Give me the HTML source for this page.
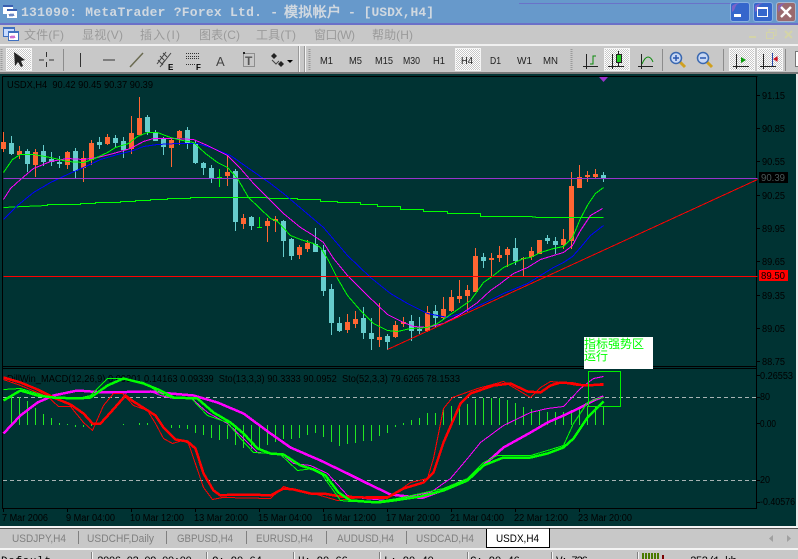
<!DOCTYPE html>
<html><head><meta charset="utf-8"><title>MetaTrader</title>
<style>
html,body{margin:0;padding:0;width:798px;height:559px;overflow:hidden;background:#c8c8c8}
svg{display:block}
text{font-family:"Liberation Sans","WenQuanYi Zen Hei",sans-serif;font-size:10px;fill:#000;white-space:pre}
.t{font-family:"Liberation Mono","WenQuanYi Zen Hei",monospace;font-weight:bold;font-size:13px;fill:#d0d8e0}
.m{font-family:"WenQuanYi Zen Hei","Liberation Sans",sans-serif;font-size:12px;fill:#9a9a9a}
.b{font-size:10.5px;fill:#222}
.k{font-size:11px;fill:#808080}
.s{font-family:"Liberation Mono",monospace;font-size:11px;fill:#000}
.c polyline,.l{fill:none;shape-rendering:crispEdges}
.x{shape-rendering:crispEdges}
</style></head><body>
<svg width="798" height="559" viewBox="0 0 798 559" xmlns="http://www.w3.org/2000/svg">
<defs>
<pattern id="chk" width="2" height="2" patternUnits="userSpaceOnUse"><rect width="2" height="2" fill="#fff"/><rect width="1" height="1" fill="#c8c8c8"/><rect x="1" y="1" width="1" height="1" fill="#c8c8c8"/></pattern>
</defs>
<!-- title -->
<rect width="798" height="23" fill="#6799cb"/>
<rect y="23" width="798" height="2" fill="#6a70c8"/>
<rect x="519" y="3" width="212" height="1" fill="#6a72c8"/>
<g class="x">
<rect x="3" y="5" width="10" height="9" fill="#fff"/><rect x="3" y="5" width="10" height="2" fill="#3a5fb0"/>
<rect x="7" y="9" width="10" height="9" fill="#fff"/><rect x="7" y="9" width="10" height="2" fill="#3a5fb0"/>
<path d="M9 14l1 2 1-2 1 2 1-2 1 2" stroke="#3a5fb0" fill="none"/>
</g>
<text class="t" x="21" y="16" textLength="257">131090: MetaTrader ?Forex Ltd. -</text>
<text class="t" x="284" y="17" style="font-size:14px" textLength="57">模拟帐户</text>
<text class="t" x="348" y="16" textLength="86">- [USDX,H4]</text>
<!-- window buttons -->
<rect x="730.5" y="2.5" width="19" height="19" rx="2.5" fill="#3566cc" stroke="#8ab0e0"/>
<path d="M732 6q3-3 8-3-4 1-5 5-1 3-3 4z" fill="#7a62c8"/>
<rect x="734" y="14" width="7" height="3" fill="#fff"/>
<rect x="753.5" y="2.5" width="19" height="19" rx="2.5" fill="#3566cc" stroke="#8ab0e0"/>
<path d="M755 6q3-3 8-3-4 1-5 5-1 3-3 4z" fill="#7a62c8"/>
<rect x="757.5" y="7.5" width="10" height="9" fill="none" stroke="#fff"/><rect x="757" y="7" width="11" height="2" fill="#fff"/>
<rect x="776.5" y="2.5" width="19" height="19" rx="2.5" fill="#9a6a6e" stroke="#a8b8d0"/>
<path d="M778 6q3-3 8-3-4 1-5 5-1 3-3 4z" fill="#8a62b0"/>
<path d="M781 7l10 10M791 7l-10 10" stroke="#fff" stroke-width="2.4"/>
<!-- menu -->
<rect y="25" width="798" height="19" fill="#c8c8c8"/>
<g class="x">
<rect x="3.5" y="27.5" width="11" height="9" fill="#c8dcff" stroke="#3f70c0"/>
<rect x="3" y="27" width="12" height="2" fill="#3f70c0"/>
<rect x="8.5" y="31.5" width="10" height="9" fill="#fff" stroke="#3f70c0"/>
<rect x="8" y="31" width="11" height="2" fill="#3f70c0"/>
<path d="M10 36l1 2 1-2 1 2 1-2 1 2" stroke="#c040c0" fill="none"/>
</g>
<text class="m" x="24" y="39" textLength="40">文件(F)</text>
<text class="m" x="82" y="39" textLength="41">显视(V)</text>
<text class="m" x="140" y="39" textLength="40">插入(I)</text>
<text class="m" x="199" y="39" textLength="41">图表(C)</text>
<text class="m" x="256" y="39" textLength="40">工具(T)</text>
<text class="m" x="314" y="39" textLength="41">窗口(W)</text>
<text class="m" x="372" y="39" textLength="41">帮助(H)</text>
<g stroke="#d4d4a8" fill="none">
<path d="M749 37h7" stroke-width="2"/>
<rect x="766.5" y="32.5" width="7" height="6"/><path d="M769 32v-2.500h7v6h-2"/>
<path d="M785 31l7 7M792 31l-7 7" stroke-width="2"/>
</g>
<!-- toolbar -->
<rect y="44" width="798" height="2" fill="#f0f0f0"/>
<rect y="46" width="798" height="27" fill="#c8c8c8"/>
<rect y="72" width="798" height="2" fill="#7a7a7a"/>
<path d="M1.500 49V71" stroke="#999" stroke-dasharray="1 1" stroke-width="2"/>
<path d="M309.500 49V71M571.500 49V70" stroke="#999" stroke-dasharray="1 1" stroke-width="2"/>
<rect x="6.500" y="48.500" width="25" height="22" fill="url(#chk)" stroke="#f4f4f4"/>
<path d="M14 52L15 66L18 62L21 67L23 66L21 61L25 60Z" fill="#222"/>
<g class="x" stroke="#333" fill="none">
<path d="M39 60H44M49 60H54M46.500 52V57M46.500 62V67"/>
<path d="M80.500 53V67M103 60H115"/>
</g>
<path d="M130 67L143 53" stroke="#6a6a50" stroke-width="1.500"/>
<path d="M63.500 49V71M662.500 49V71M723.500 49V71M785.500 49V71" stroke="#8c8c8c"/>
<g stroke="#444" fill="none"><path d="M157 64L166 52M160 67L171 53M160 56l4 4M163 53l4 4M158 60l5 5M165 60l-3 4"/></g>
<text x="168" y="70" style="font-size:8px;font-weight:bold">E</text>
<path class="x" d="M186 53.500H199M186 56.500H199M186 58.500H199M186 64.500H195" stroke="#333" stroke-dasharray="1 1"/>
<text x="196" y="70" style="font-size:8px;font-weight:bold">F</text>
<text x="216" y="66" style="font-size:13px;fill:#444">A</text>
<rect x="243.500" y="53.500" width="11" height="13" fill="none" stroke="#555" stroke-dasharray="1 1"/>
<rect x="243" y="52" width="2" height="2" fill="#222"/>
<text x="245" y="65" style="font-size:12px;font-weight:bold;fill:#555">T</text>
<path d="M274 53l3 3-3 3-3-3z" fill="#222"/><path d="M281 61l3 3-3 3-3-3z" fill="#222"/>
<path d="M272 60l4 4 3-3" stroke="#444" fill="none"/>
<path d="M287 60h6l-3 3z" fill="#000"/>
<path d="M299.500 46V72M305.500 46V72" stroke="#f4f4f4"/>
<path d="M298.500 46V72M304.500 46V72" stroke="#999"/>
<rect x="455.500" y="48.500" width="25" height="22" fill="url(#chk)" stroke="#f4f4f4"/>
<text class="b" x="320" y="64" lengthAdjust="spacingAndGlyphs" textLength="13">M1</text>
<text class="b" x="349" y="64" lengthAdjust="spacingAndGlyphs" textLength="13">M5</text>
<text class="b" x="375" y="64" lengthAdjust="spacingAndGlyphs" textLength="18">M15</text>
<text class="b" x="403" y="64" lengthAdjust="spacingAndGlyphs" textLength="17">M30</text>
<text class="b" x="433" y="64" lengthAdjust="spacingAndGlyphs" textLength="12">H1</text>
<text class="b" x="461" y="64" lengthAdjust="spacingAndGlyphs" textLength="12">H4</text>
<text class="b" x="490" y="64" lengthAdjust="spacingAndGlyphs" textLength="11">D1</text>
<text class="b" x="517" y="64" lengthAdjust="spacingAndGlyphs" textLength="15">W1</text>
<text class="b" x="543" y="64" lengthAdjust="spacingAndGlyphs" textLength="15">MN</text>
<!-- chart icons -->
<rect x="604.500" y="48.500" width="25" height="22" fill="url(#chk)" stroke="#f4f4f4"/>
<rect x="729.500" y="48.500" width="25" height="22" fill="url(#chk)" stroke="#f4f4f4"/>
<rect x="757.500" y="48.500" width="25" height="22" fill="url(#chk)" stroke="#f4f4f4"/>
<g class="x" stroke="#222" fill="none">
<path d="M586.500 54V69M583 66.500H598"/>
<path d="M612.500 54V69M608 66.500H624"/>
<path d="M641.500 54V69M638 66.500H653"/>
<path d="M736.500 54V69M733 66.500H749"/>
<path d="M763.500 54V69M760 66.500H776"/>
</g>
<path d="M590 64h3v-8h3" stroke="#0a8a0a" fill="none" class="x"/>
<path d="M618.500 51V66" stroke="#222" class="x"/>
<rect x="616.500" y="54.500" width="5" height="8" fill="#22cc22" stroke="#222" class="x"/>
<path d="M642 64q3-7 6-7t5 5" stroke="#0a8a0a" fill="none"/>
<path d="M741 57l5 3-5 3z" fill="#0a9a0a"/>
<path d="M772.500 53V66" stroke="#2244aa" class="x"/>
<path d="M774 59h4M777 57l-3 2 3 2z" stroke="#cc1122" fill="#cc1122"/>
<g>
<path d="M680 62l5 5" stroke="#d0a020" stroke-width="3"/>
<circle cx="676" cy="58" r="5.500" fill="#c8d8f4" stroke="#3a68b0" stroke-width="1.500"/>
<path d="M673 58h6M676 55v6" stroke="#2a58b0" stroke-width="1.500"/>
<path d="M707 62l5 5" stroke="#d0a020" stroke-width="3"/>
<circle cx="703" cy="58" r="5.500" fill="#c8d8f4" stroke="#3a68b0" stroke-width="1.500"/>
<path d="M700 58h6" stroke="#2a58b0" stroke-width="1.500"/>
</g>
<rect x="795.500" y="51.500" width="4" height="15" fill="#fff" stroke="#777"/>
<!-- chart -->
<rect y="74" width="796" height="452" fill="#003333"/>
<rect x="796" y="74" width="2" height="452" fill="#e8e8e8"/>
<g class="x" stroke="#000" fill="none">
<path d="M2.500 76V509M2 76.500H757.500M756.500 76V509M2 366.500H757M2 368.500H757M2 508.500H757"/>
<path d="M757 95.500h3M757 128.500h3M757 161.500h3M757 195.500h3M757 228.500h3M757 261.500h3M757 295.500h3M757 328.500h3M757 361.500h3M757 375.500h3M757 397.500h3M757 423.500h3M757 480.500h3M757 502.500h3"/>
<path d="M3.500 509v3M67.500 509v3M131.500 509v3M195.500 509v3M259.500 509v3M323.500 509v3M387.500 509v3M451.500 509v3M515.500 509v3M579.500 509v3"/>
</g>
<path d="M599 77h9l-4.500 5z" fill="#9933cc"/>
<text x="7" y="88" lengthAdjust="spacingAndGlyphs" textLength="146">USDX,H4  90.42 90.45 90.37 90.39</text>
<g>
<text x="762" y="99" lengthAdjust="spacingAndGlyphs" textLength="23">91.15</text>
<text x="762" y="132" lengthAdjust="spacingAndGlyphs" textLength="23">90.85</text>
<text x="762" y="165" lengthAdjust="spacingAndGlyphs" textLength="23">90.55</text>
<text x="762" y="199" lengthAdjust="spacingAndGlyphs" textLength="23">90.25</text>
<text x="762" y="232" lengthAdjust="spacingAndGlyphs" textLength="23">89.95</text>
<text x="762" y="265" lengthAdjust="spacingAndGlyphs" textLength="23">89.65</text>
<text x="762" y="299" lengthAdjust="spacingAndGlyphs" textLength="23">89.35</text>
<text x="762" y="332" lengthAdjust="spacingAndGlyphs" textLength="23">89.05</text>
<text x="762" y="365" lengthAdjust="spacingAndGlyphs" textLength="23">88.75</text>
<text x="760" y="379" lengthAdjust="spacingAndGlyphs" textLength="33">0.26553</text>
<text x="760" y="400" lengthAdjust="spacingAndGlyphs" textLength="10">80</text>
<text x="760" y="427" lengthAdjust="spacingAndGlyphs" textLength="16">0.00</text>
<text x="760" y="483" lengthAdjust="spacingAndGlyphs" textLength="10">20</text>
<text x="760" y="505" lengthAdjust="spacingAndGlyphs" textLength="35">-0.40576</text>
</g>
<!-- candles -->
<path class="l" stroke="#ff6633" d="M3.500 132V152M19.500 146V159M35.500 149V177M67.500 151V169M83.500 151V182M91.500 140V165M107.500 134V145M131.500 116V154M139.500 97V135M171.500 138V167M179.500 130V145M227.500 156V186M243.500 214V229M267.500 218V242M275.500 216V232M299.500 245V259M307.500 240V252M347.500 314V333M355.500 311V328M379.500 303V347M395.500 321V338M403.500 317V327M427.500 306V332M443.500 297V320M451.500 290V312M459.500 280V303M467.500 285V312M475.500 248V292M491.500 253V277M499.500 246V262M507.500 247V267M523.500 257V276M531.500 247V260M563.500 229V249M571.500 172V249M579.500 165V188M587.500 171V182M595.500 169V179"/>
<path class="x" fill="#ff6633" d="M1 142h5V149h-5zM17 151h5V155h-5zM33 152h5V165h-5zM65 152h5V165h-5zM81 158h5V168h-5zM89 143h5V160h-5zM105 137h5V144h-5zM129 133h5V149h-5zM137 118h5V135h-5zM169 140h5V148h-5zM177 131h5V138h-5zM225 172h5V176h-5zM241 218h5V224h-5zM265 221h5V226h-5zM273 219h5V221h-5zM297 247h5V255h-5zM305 243h5V249h-5zM345 322h5V330h-5zM353 319h5V324h-5zM377 337h5V340h-5zM393 325h5V337h-5zM401 322h5V324h-5zM425 312h5V331h-5zM441 309h5V318h-5zM449 297h5V311h-5zM457 296h5V299h-5zM465 290h5V296h-5zM473 256h5V292h-5zM489 258h5V260h-5zM497 255h5V258h-5zM505 249h5V255h-5zM521 258h5V259h-5zM529 251h5V257h-5zM537 240h5V254h-5zM561 239h5V245h-5zM569 186h5V241h-5zM577 177h5V188h-5zM585 175h5V177h-5zM593 174h5V177h-5z"/>
<path class="l" stroke="#66cccc" d="M11.500 136V155M27.500 149V172M43.500 145V166M51.500 152V166M59.500 156V168M75.500 148V178M99.500 137V149M115.500 135V148M123.500 137V158M147.500 115V135M155.500 130V141M163.500 137V155M187.500 127V149M195.500 141V164M203.500 162V175M211.500 165V183M235.500 169V231M251.500 216V230M283.500 220V257M291.500 238V260M315.500 228V252M323.500 245V296M331.500 284V335M339.500 317V332M363.500 307V339M371.500 318V350M387.500 334V350M411.500 315V341M419.500 317V334M435.500 305V327M483.500 253V268M515.500 238V265M547.500 235V244M555.500 237V254M603.500 172V182"/>
<path class="x" fill="#66cccc" d="M9 143h5V154h-5zM25 151h5V164h-5zM41 151h5V162h-5zM49 159h5V162h-5zM57 162h5V164h-5zM73 151h5V171h-5zM97 142h5V145h-5zM113 138h5V143h-5zM121 141h5V150h-5zM145 117h5V132h-5zM153 132h5V141h-5zM161 138h5V147h-5zM185 130h5V143h-5zM193 143h5V163h-5zM201 163h5V168h-5zM209 168h5V179h-5zM233 171h5V222h-5zM249 217h5V226h-5zM281 221h5V241h-5zM289 239h5V256h-5zM313 244h5V252h-5zM321 250h5V291h-5zM329 289h5V323h-5zM337 323h5V331h-5zM361 318h5V333h-5zM369 333h5V339h-5zM385 336h5V342h-5zM409 321h5V331h-5zM417 329h5V331h-5zM433 311h5V318h-5zM481 257h5V261h-5zM513 248h5V261h-5zM545 238h5V241h-5zM553 241h5V245h-5zM601 175h5V179h-5z"/>
<path class="l" stroke="#00ff00" d="M219.500 169V187M217 177.500H222M259.500 217V228M257 227.500H262"/>
<g class="c" stroke-width="1" transform="translate(.5 .5)">
<polyline stroke="#00ff00" points="3,207 23,206 47,205 47,204 80,204 80,203 95,203 95,202 120,202 120,201 135,201 135,200 150,200 150,199 167,199 167,198 190,198 190,197 265,197 270,198 297,198 297,199 320,199 320,201 337,201 337,202 360,202 360,204 377,204 377,206 400,206 400,209 423,209 423,211 447,211 447,213 480,213 480,216 530,216 537,217 603,217"/>
<polyline stroke="#0000ff" points="3,219 17,205 33,192 50,182 67,174 83,167 100,159 117,154 133,150 143,146 157,144 177,143 197,143 213,148 230,155 247,167 270,183 283,193 303,210 323,227 347,255 370,277 390,293 407,303 427,313 447,317 463,312 483,303 503,293 527,283 540,275 553,267 563,262 572,256 580,247 590,235 603,225"/>
<polyline stroke="#ff00ff" points="3,199 10,188 20,179 33,168 50,161 67,158 83,159 97,157 113,153 130,148 143,141 153,138 173,138 193,139 207,145 227,155 240,168 253,183 270,200 283,213 300,227 313,235 323,242 333,258 347,275 367,295 387,314 403,322 413,326 427,327 443,323 460,314 477,302 490,290 500,283 513,273 527,267 540,259 553,255 563,252 572,245 580,230 590,215 602,208"/>
<polyline stroke="#00ff00" points="3,172 12,159 20,154 33,154 50,157 67,161 83,162 92,159 107,152 115,147 128,143 137,136 147,132 157,132 170,137 182,140 193,142 205,153 217,162 227,167 237,178 248,197 270,218 277,221 290,235 300,239 313,243 320,247 328,260 337,278 347,295 360,310 373,323 387,330 397,331 410,328 427,327 437,323 450,314 460,307 470,300 483,282 493,275 503,267 523,258 530,257 540,252 553,248 563,246 572,237 580,218 588,203 595,193 603,187"/>
<polyline stroke="#9933cc" points="3,178 757,178"/>
<polyline stroke="#ff0000" stroke-width="1" points="3,276 757,276"/>
<polyline stroke="#ff0000" points="387,349 757,179"/>
</g>
<!-- sub window -->
<path class="l" stroke="#a8b4b4" stroke-dasharray="4 3" d="M3 397.500H757M3 480.500H757"/>
<text x="7" y="382" lengthAdjust="spacingAndGlyphs" textLength="453">DillWin_MACD(12,26,9) 0.09301 0.14163 0.09339  Sto(13,3,3) 90.3333 90.0952  Sto(52,3,3) 79.6265 78.1533</text>
<path class="l" stroke="#22e822" d="M11.500 397V425M19.500 397V425M27.500 401V425M35.500 408V425M43.500 414V425M51.500 418V425M59.500 423V425M67.500 424V425M75.500 425V427M83.500 425V427M91.500 424V426M123.500 424V425M139.500 423V425M147.500 423V425M171.500 425V428M179.500 425V428M187.500 425V429M195.500 425V433M203.500 425V435M211.500 425V438M219.500 425V440M227.500 425V439M235.500 425V445M243.500 425V448M251.500 425V449M259.500 425V450M267.500 425V445M275.500 425V442M283.500 425V439M291.500 425V439M299.500 425V438M307.500 425V435M315.500 425V433M323.500 425V437M331.500 425V442M339.500 425V446M347.500 425V444M355.500 425V443M363.500 425V441M371.500 425V441M379.500 425V436M387.500 425V433M395.500 425V427M403.500 423V425M411.500 420V425M419.500 418V425M427.500 413V425M435.500 413V425M443.500 409V425M451.500 406V425M459.500 404V425M467.500 404V425M475.500 399V425M483.500 398V425M491.500 398V425M499.500 398V425M507.500 400V425M515.500 403V425M523.500 407V425M531.500 409V425M539.500 411V425M547.500 412V425M555.500 412V425M563.500 412V425M571.500 410V425M579.500 407V425M587.500 406V425M595.500 406V425M603.500 407V425"/>
<g class="c" transform="translate(.5 .5)">
<polyline stroke="#ff00ff" stroke-width="1" points="150,391 160,395 173,398 190,397 207,412 227,423 243,438 257,452 270,453 283,455 293,463 310,465 327,473 347,495 363,498 387,500 403,497 430,492 450,478 467,458 480,442 503,425 530,412 547,408 563,406 580,388 593,378 603,376"/>
<polyline stroke="#ff00ff" stroke-width="2.5" points="3,433 20,415 37,402 53,395 77,390 103,392 150,391 170,393 193,395 217,402 243,413 270,433 290,447 320,460 347,473 367,483 390,494 417,497 423,497 447,488 467,480 483,465 503,447 530,432 547,422 563,415 580,407 593,400 603,396"/>
<polyline stroke="#ff0000" stroke-width="1" points="3,379 20,385 37,392 47,396 58,406 70,406 83,422 92,430 103,405 113,393 122,393 133,405 147,410 155,423 163,438 172,443 182,440 188,443 203,487 212,499 222,497 270,498 283,486 297,490 313,493 337,500 367,496 390,496 410,482 427,478 433,458 443,408 452,397 477,388 503,381 530,397 540,387 550,381 560,382 577,385 603,383"/>
<polyline stroke="#ff0000" stroke-width="2.5" points="3,377 20,382 37,389 53,397 70,404 83,413 92,423 100,423 110,412 125,395 133,401 155,415 163,427 175,439 187,441 195,448 203,473 213,490 220,495 233,494 250,494 270,495 283,488 293,489 310,493 323,493 340,496 363,497 387,497 403,488 423,482 433,472 443,442 460,403 470,393 493,385 510,383 527,391 540,392 550,385 560,382 573,383 583,385 603,384"/>
<polyline stroke="#00ff00" stroke-width="1" points="3,389 20,388 37,393 53,398 77,398 90,395 107,378 123,378 143,382 160,393 173,398 190,397 207,415 227,422 240,438 253,452 270,453 280,454 297,470 313,468 320,472 340,500 350,501 377,501 397,498 420,493 443,488 467,478 483,462 497,455 530,455 547,450 563,445 573,423 587,402 597,398 603,397"/>
<polyline stroke="#00ff00" stroke-width="2.5" points="3,400 20,390 37,395 53,397 77,398 90,397 107,385 123,378 143,383 160,390 173,397 197,398 213,412 230,422 243,433 257,448 270,453 283,454 300,465 313,469 325,475 338,492 350,500 377,502 393,500 420,496 443,490 467,480 483,465 503,457 530,457 547,453 563,447 573,438 587,417 603,401"/>
</g>
<rect x="588.500" y="371.500" width="32" height="35" fill="none" stroke="#00ee00" class="x"/>
<!-- price tags -->
<rect x="759" y="172" width="29" height="11" fill="#000"/>
<text x="761" y="181" lengthAdjust="spacingAndGlyphs" textLength="24" style="fill:#4a5a5a">90.39</text>
<rect x="759" y="270" width="29" height="11" fill="#ff0000"/>
<text x="761" y="279" lengthAdjust="spacingAndGlyphs" textLength="24">89.50</text>
<rect x="584" y="337" width="69" height="32" fill="#fff"/>
<text x="584" y="348" style="font-family:'WenQuanYi Zen Hei','Noto Sans CJK SC',sans-serif;font-size:12px;fill:#00ff00">指标强势区</text>
<text x="584" y="360" style="font-family:'WenQuanYi Zen Hei','Noto Sans CJK SC',sans-serif;font-size:12px;fill:#00ff00">运行</text>
<!-- time labels -->
<g>
<text x="2" y="521" lengthAdjust="spacingAndGlyphs" textLength="46">7 Mar 2006</text>
<text x="66" y="521" lengthAdjust="spacingAndGlyphs" textLength="49">9 Mar 04:00</text>
<text x="130" y="521" lengthAdjust="spacingAndGlyphs" textLength="54">10 Mar 12:00</text>
<text x="194" y="521" lengthAdjust="spacingAndGlyphs" textLength="54">13 Mar 20:00</text>
<text x="258" y="521" lengthAdjust="spacingAndGlyphs" textLength="54">15 Mar 04:00</text>
<text x="322" y="521" lengthAdjust="spacingAndGlyphs" textLength="54">16 Mar 12:00</text>
<text x="386" y="521" lengthAdjust="spacingAndGlyphs" textLength="54">17 Mar 20:00</text>
<text x="450" y="521" lengthAdjust="spacingAndGlyphs" textLength="54">21 Mar 04:00</text>
<text x="514" y="521" lengthAdjust="spacingAndGlyphs" textLength="54">22 Mar 12:00</text>
<text x="578" y="521" lengthAdjust="spacingAndGlyphs" textLength="54">23 Mar 20:00</text>
</g>
<!-- tabs -->
<rect y="526" width="798" height="2" fill="#f4f4f4"/>
<rect y="528" width="798" height="1" fill="#555"/>
<rect y="529" width="798" height="19" fill="#c8c8c8"/>
<rect y="548" width="798" height="2" fill="#f4f4f4"/>
<rect y="550" width="798" height="9" fill="#c8c8c8"/>
<path class="x" stroke="#808080" d="M78.500 531V544M166.500 531V544M246.500 531V544M326.500 531V544M406.500 531V544"/>
<rect x="487" y="529" width="62" height="18" fill="#fff"/>
<path class="x" stroke="#000" fill="none" d="M486.500 529V547.500H549.500V528"/>
<text class="k" x="12" y="542" lengthAdjust="spacingAndGlyphs" textLength="54">USDJPY,H4</text>
<text class="k" x="87" y="542" lengthAdjust="spacingAndGlyphs" textLength="67">USDCHF,Daily</text>
<text class="k" x="177" y="542" lengthAdjust="spacingAndGlyphs" textLength="56">GBPUSD,H4</text>
<text class="k" x="256" y="542" lengthAdjust="spacingAndGlyphs" textLength="57">EURUSD,H4</text>
<text class="k" x="337" y="542" lengthAdjust="spacingAndGlyphs" textLength="57">AUDUSD,H4</text>
<text class="k" x="416" y="542" lengthAdjust="spacingAndGlyphs" textLength="58">USDCAD,H4</text>
<text class="k" x="496" y="542" lengthAdjust="spacingAndGlyphs" textLength="43" style="fill:#000">USDX,H4</text>
<path d="M773 535v7l-4-3.500z" fill="#a0a0a0"/><path d="M787 535v7l4-3.500z" fill="#a0a0a0"/>
<!-- status -->
<path class="x" stroke="#808080" d="M91.500 552V559M206.500 552V559M293.500 552V559M379.500 552V559M467.500 552V559M551.500 552V559M637.500 552V559"/>
<path class="x" stroke="#f4f4f4" d="M92.500 552V559M207.500 552V559M294.500 552V559M380.500 552V559M468.500 552V559M552.500 552V559M638.500 552V559"/>
<text class="s" x="1" y="564" textLength="50">Default</text>
<text class="s" x="97" y="564" textLength="95">2006.03.09 00:00</text>
<text class="s" x="212" y="564" textLength="50">O: 90.64</text>
<text class="s" x="298" y="564" textLength="50">H: 90.66</text>
<text class="s" x="384" y="564" textLength="50">L: 90.40</text>
<text class="s" x="470" y="564" textLength="50">C: 90.46</text>
<text class="s" x="556" y="564" textLength="32">V: 726</text>
<path class="x" stroke="#4a7a00" stroke-width="2" d="M643 553V559M646 553V559M649 553V559M652 553V559M655 553V559M658 553V559"/>
<path class="x" stroke="#7a0000" stroke-width="2" d="M663 555V559"/>
<text class="s" x="690" y="564" textLength="47">252/1 kb</text>
</svg>
</body></html>
